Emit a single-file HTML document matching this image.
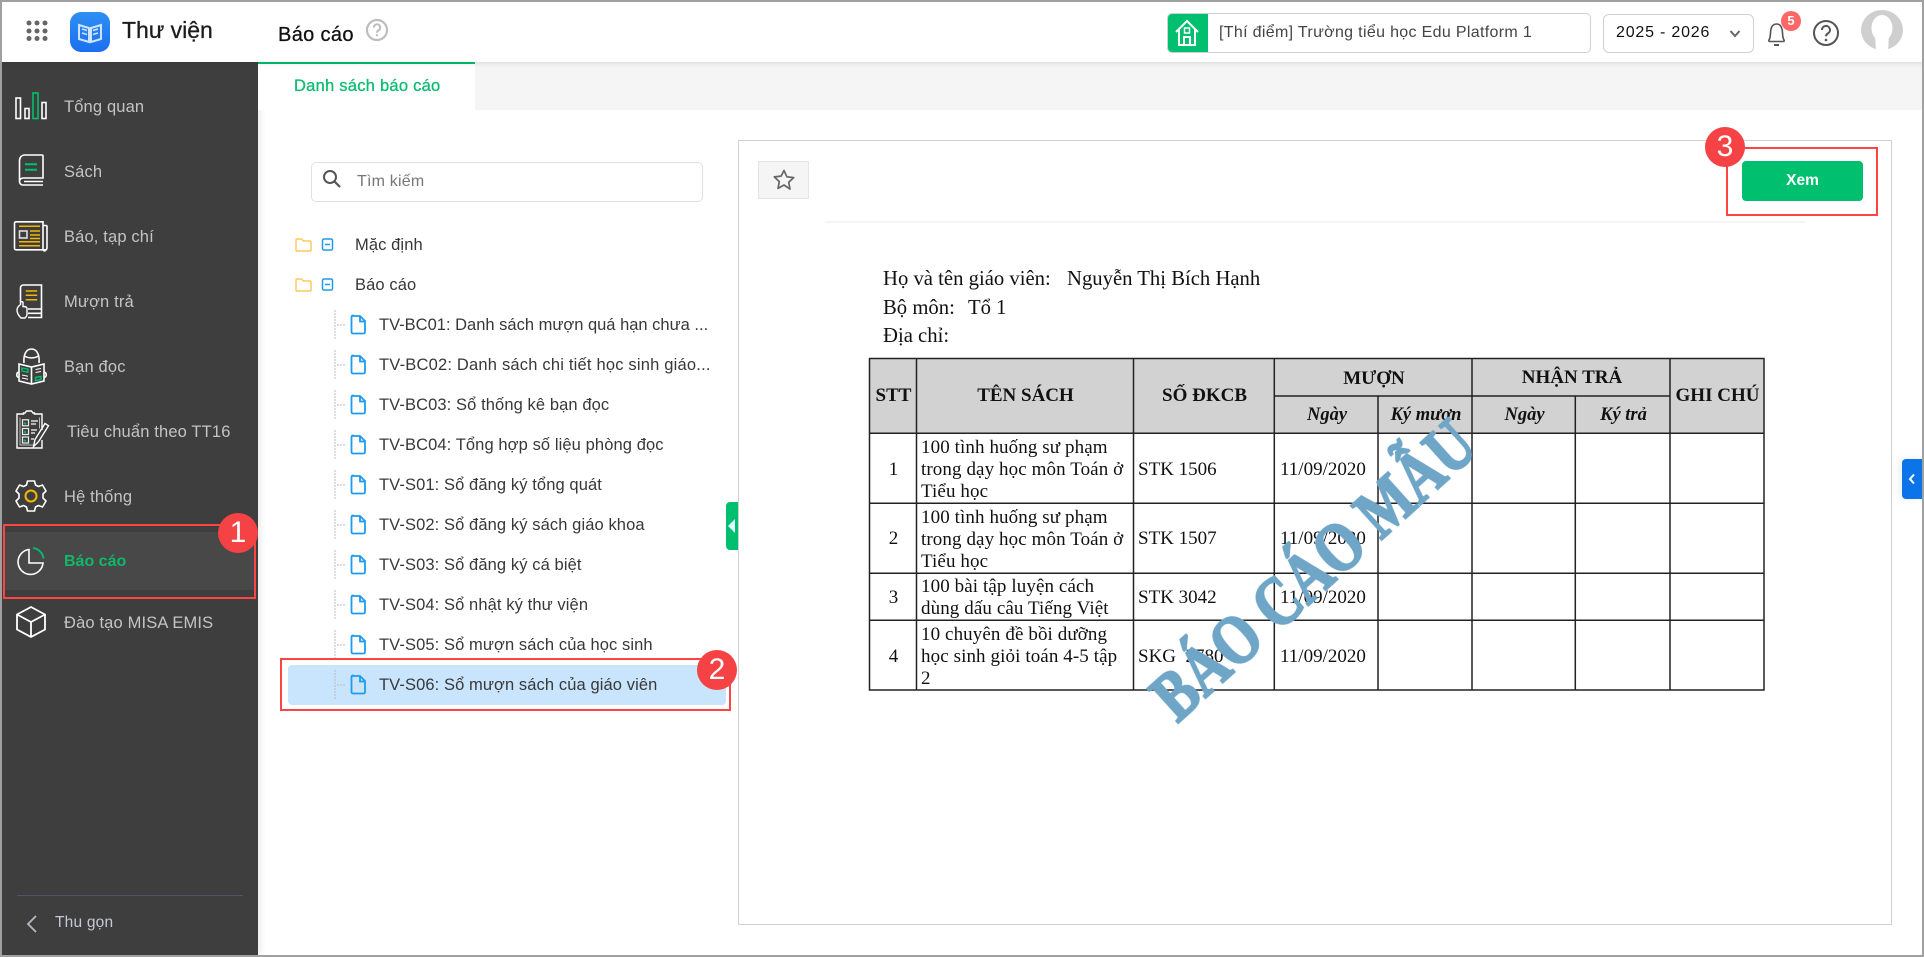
<!DOCTYPE html>
<html lang="vi"><head><meta charset="utf-8"><title>Thư viện</title>
<style>
*{box-sizing:border-box}
html,body{margin:0;padding:0;width:1924px;height:957px;overflow:hidden;background:#fff;font-family:"Liberation Sans",sans-serif}
.a{position:absolute}
.t{position:absolute;white-space:nowrap;height:24px;line-height:24px}
.nav{font-size:16.500px;letter-spacing:.15px;color:#c4c4c4;left:64px}
.tree{font-size:16.500px;letter-spacing:.1px;color:#383838}
.ic{position:absolute;overflow:visible}
.rb{position:absolute;border:2px solid #f44;z-index:5}
.badge{position:absolute;width:40px;height:40px;border-radius:50%;background:#f44245;color:#fff;font-size:30px;line-height:40px;text-align:center;z-index:6}
.s{font-family:"Liberation Serif",serif;color:#111;position:absolute;white-space:nowrap;filter:blur(.35px)}
.c{text-align:center}
.h{font-size:19px;line-height:24px;font-weight:bold}
.i{font-size:18.500px;line-height:24px;font-weight:bold;font-style:italic}
.b{font-size:19px;line-height:24px}
.m{font-size:19px;line-height:22px;letter-spacing:.1px}
.d{font-size:20.700px;line-height:24px}
</style></head><body>

<!-- header -->
<div class="a" style="left:0;top:0;width:1924px;height:62px;background:#fff;box-shadow:0 1px 5px rgba(0,0,0,.12);z-index:2"></div>
<div class="a" style="left:258px;top:62px;width:1666px;height:48px;background:#f5f5f5"></div>

<div style="position:absolute;left:0;top:0;width:1924px;height:62px;z-index:3">
<svg class="ic" style="left:0;top:0" width="120" height="60">
 <g fill="#666"><circle cx="29" cy="23" r="2.5"/><circle cx="37" cy="23" r="2.5"/><circle cx="45" cy="23" r="2.5"/><circle cx="29" cy="31" r="2.5"/><circle cx="37" cy="31" r="2.5"/><circle cx="45" cy="31" r="2.5"/><circle cx="29" cy="38.500" r="2.5"/><circle cx="37" cy="38.500" r="2.5"/><circle cx="45" cy="38.500" r="2.5"/></g>
 <defs><linearGradient id="g" x1="0" y1="0" x2="0" y2="1"><stop offset="0" stop-color="#2f8ff5"/><stop offset="1" stop-color="#1a6ff0"/></linearGradient></defs>
 <rect x="70" y="12" width="40" height="40" rx="11" fill="url(#g)"/>
 <path d="M79 25l10 3v14l-10-3zM101 25l-10 3v14l10-3z" fill="none" stroke="#cfe4ff" stroke-width="2"/>
 <path d="M82 29l5 1.500M82 33l5 1.500M98 29l-5 1.500M98 33l-5 1.500" stroke="#cfe4ff" stroke-width="1.500"/>
</svg>
<div class="t" style="left:122px;top:18px;font-size:23px;color:#1c1c1c;-webkit-text-stroke:.3px #1c1c1c">Thư viện</div>
<div class="t" style="left:278px;top:23px;font-size:20px;letter-spacing:.35px;color:#111;-webkit-text-stroke:.3px #111">Báo cáo</div>
<svg class="ic" style="left:365px;top:18px" width="24" height="24"><circle cx="12" cy="12" r="10" fill="none" stroke="#bdbdbd" stroke-width="2.200"/><path d="M8.800 9.500a3.200 3.200 0 1 1 4.800 2.800c-1 .6-1.600 1.100-1.600 2.400" fill="none" stroke="#bdbdbd" stroke-width="2"/><circle cx="12" cy="17.300" r="1.200" fill="#bdbdbd"/></svg>

<!-- school select -->
<div class="a" style="left:1167px;top:13px;width:424px;height:40px;border:1px solid #d0d0d0;border-radius:5px;background:#fff;overflow:hidden"><div style="width:40px;height:40px;background:#00bf6f"></div></div>
<svg class="ic" style="left:1174px;top:19px" width="26" height="28"><path d="M2 13L13 2l11 11M5 10v16h16V10M10 26v-8h6v8" fill="none" stroke="#fff" stroke-width="2"/><rect x="10.500" y="9" width="5" height="5" fill="none" stroke="#fff" stroke-width="1.500"/></svg>
<div class="t" style="left:1219px;top:21px;font-size:16px;letter-spacing:.33px;color:#444">[Thí điểm] Trường tiểu học Edu Platform 1</div>
<div class="a" style="left:1603px;top:14px;width:151px;height:39px;border:1px solid #d0d0d0;border-radius:6px;background:#fff"></div>
<div class="t" style="left:1616px;top:21px;font-size:16px;letter-spacing:.8px;color:#111">2025 - 2026</div>
<svg class="ic" style="left:1729px;top:29px" width="12" height="10"><path d="M1.500 2l4.500 5 4.500-5" fill="none" stroke="#666" stroke-width="2"/></svg>
<svg class="ic" style="left:1762px;top:18px" width="28" height="30"><path d="M7 22c2-3 1-7 2-11 .8-3.500 3-5 5.500-5s4.700 1.500 5.500 5c1 4 0 8 2 11 .5 1 0 1.500-1 1.500H8c-1 0-1.500-.5-1-1.500z" fill="none" stroke="#555" stroke-width="1.600"/><path d="M12 27h5" stroke="#555" stroke-width="2"/></svg>
<div class="a" style="left:1781px;top:11px;width:20px;height:20px;border-radius:50%;background:#f66;color:#fff;font-size:13px;font-weight:bold;text-align:center;line-height:20px">5</div>
<svg class="ic" style="left:1812px;top:19px" width="28" height="28"><circle cx="14" cy="14" r="12" fill="none" stroke="#555" stroke-width="2"/><path d="M10 11a4 4 0 1 1 6 3.400c-1.300.8-2 1.400-2 2.900" fill="none" stroke="#555" stroke-width="2"/><circle cx="14" cy="21" r="1.300" fill="#555"/></svg>
<svg class="ic" style="left:1860px;top:10px" width="44" height="42"><ellipse cx="22" cy="20" rx="21" ry="20" fill="#cfcfcf"/><ellipse cx="22" cy="18" rx="10.500" ry="13" fill="#fff"/><path d="M15 25h14l-1 16h-12z" fill="#fff"/></svg>
</div>

<!-- sidebar -->
<div class="a" style="left:2px;top:62px;width:256px;height:893px;background:#3e3e3e;box-shadow:3px 0 6px rgba(0,0,0,.08)"></div>
<div class="a" style="left:4px;top:532px;width:252px;height:58px;background:#484848;border-left:1px solid #00bf6f"></div>

<svg class="ic" style="left:0;top:0;z-index:1" width="258" height="660" fill="none" stroke="#fff" stroke-width="1.600">
 <!-- Tổng quan -->
 <rect x="16" y="98" width="4.500" height="20.500"/><rect x="25" y="108.500" width="4" height="10"/><rect x="33" y="93" width="5" height="25.500" stroke="#00bf6f"/><rect x="42" y="102.500" width="4" height="16"/>
 <!-- Sách -->
 <path d="M25 155h17a1 1 0 0 1 1 1v22H23a3.500 3.500 0 0 0-3.500 3.500c0 2 1.500 3.500 3.500 3.500h20M24 181.500h19M19.500 181.500V161c0-3.500 2-6 5.500-6"/>
 <path d="M25 164.300h12M25 169.700h12" stroke="#00bf6f" stroke-width="2"/>
 <!-- Báo -->
 <path d="M16 221.800h27v27a1 1 0 0 0 3 1H16a1.500 1.500 0 0 1-1.500-1.500v-25a1.500 1.500 0 0 1 1.500-1.500zM43 225.500h3a1 1 0 0 1 1 1V248a2 2 0 0 1-2 2"/>
 <path d="M19 226.300h21M30 231h10M30 235h10M30 238.500h10M19 241.800h21M19 245.800h21" stroke="#f2b705" stroke-width="1.500"/><rect x="19.500" y="231" width="7.500" height="7" stroke="#ddd"/>
 <!-- Mượn trả -->
 <path d="M20.500 302v-14c0-1.800 1.200-3 3-3h18v32.500H28M28 309h14M28 313.300h14"/>
 <path d="M25.700 291h11.500M25.700 295.300h11.500M25.700 299.700h11.500" stroke="#f2b705" stroke-width="1.500"/>
 <path d="M17 310c0-2.500 1.500-4 3.500-5.500v-2c0-1 2.500-1 2.500 0v4c2 0 4 .5 4 2v6c0 1.500-1 2.500-2 3.500h-4c-2-2-4-5-4-8z" stroke-width="1.400"/>
 <!-- Bạn đọc -->
 <path d="M24 363c-.8-9 2.500-14 7.500-14s8.300 5 7.500 14M24.500 356c4 2.500 10 2.500 14 0"/>
 <path d="M19 364l12.500 3 12.500-3v17l-12.500 3-12.500-3zM31.500 367v17"/><path d="M19 372c-3 .5-3 5 0 5.500M44 372c3 .5 3 5 0 5.500"/>
 <path d="M22 368l6 1.200v3l-6-1.200zM35.500 377.500l5.500-1v3l-5.500 1z" stroke="#00bf6f" stroke-width="1.400"/>
 <path d="M22 375l6 1.200M22 378l6 1.200M35.500 369.500l5.500-1M35.500 372.500l5.500-1" stroke-width="1"/>
 <!-- Tiêu chuẩn -->
 <path d="M42 430v-16h-7.500v-1h-1.500l-1.500-2h-5l-1.500 2h-1.500v1H17v34h25v-8" stroke-width="1.400"/>
 <path d="M20 417.500v27.500h13M39.500 417.500v11" stroke="#bbb" stroke-width="1"/>
 <rect x="22.500" y="419.800" width="6" height="6" stroke="#eee" stroke-width="1.200"/><rect x="22.500" y="428.500" width="6" height="6" stroke="#eee" stroke-width="1.200"/><rect x="22.500" y="437" width="6" height="6" stroke="#eee" stroke-width="1.200"/>
 <path d="M24 423l2 1M24 431.500l2 1M24 440l2 1" stroke="#00bf6f" stroke-width="2"/>
 <path d="M31 421h7M31 424h5M31 430h6M31 433h4M31 439h3" stroke-width="1.200"/>
 <path d="M33.500 446.500l1.500-7 10-16 3.500 2.200-10 16z" stroke-width="1.400"/>
 <!-- Gear -->
 <path d="M27.500 481h7l1 4 3 1.500 4-1.500 3.500 6-3 3v4l3 3-3.500 6-4-1.500-3 1.500-1 4h-7l-1-4-3-1.500-4 1.500-3.500-6 3-3v-4l-3-3 3.500-6 4 1.500 3-1.500z" stroke-linejoin="round"/>
 <circle cx="31" cy="496" r="5.500" stroke="#f2b705" stroke-width="2"/>
 <!-- Pie -->
 <path d="M29 549.500a12.500 12.500 0 1 0 14 13.500H29z" stroke-width="1.600"/>
 <path d="M33 548a12 12 0 0 1 10.500 10.500" stroke="#00bf6f" stroke-width="1.800"/>
 <!-- Cube -->
 <path d="M31 607l14 7.500v15L31 637l-14-7.500v-15zM17 614.500L31 622l14-7.500M31 622v15" stroke-width="1.800"/>
</svg>

<div class="t nav" style="top:95px">Tổng quan</div>
<div class="t nav" style="top:160px">Sách</div>
<div class="t nav" style="top:225px">Báo, tạp chí</div>
<div class="t nav" style="top:290px">Mượn trả</div>
<div class="t nav" style="top:355px">Bạn đọc</div>
<div class="t nav" style="top:420px;left:67px">Tiêu chuẩn theo TT16</div>
<div class="t nav" style="top:485px">Hệ thống</div>
<div class="t nav" style="top:550px;color:#10b869;font-weight:bold;font-size:16px;letter-spacing:0">Báo cáo</div>
<div class="t nav" style="top:611px">Đào tạo MISA EMIS</div>

<div class="a" style="left:17px;top:895px;width:226px;height:1px;background:#4c5766"></div>
<svg class="ic" style="left:25px;top:914px" width="14" height="20"><path d="M11 2L3 10l8 8" fill="none" stroke="#b8b8c4" stroke-width="1.800"/></svg>
<div class="t" style="left:55px;top:911px;font-size:15.500px;letter-spacing:.2px;color:#c6c8d6">Thu gọn</div>

<div class="rb" style="left:3px;top:524px;width:253px;height:75px"></div>
<div class="badge" style="left:218px;top:513px">1</div>

<!-- tab -->
<div class="a" style="left:258px;top:62px;width:217px;height:48px;background:#fff;border-top:2px solid #00bf6f"></div>
<div class="t" style="left:294px;top:74px;font-size:16.500px;letter-spacing:.25px;color:#0cbc70;-webkit-text-stroke:.3px #0cbc70">Danh sách báo cáo</div>

<!-- search -->
<div class="a" style="left:311px;top:162px;width:392px;height:40px;border:1px solid #e0e0e0;border-radius:5px"></div>
<svg class="ic" style="left:322px;top:169px" width="20" height="20"><circle cx="8" cy="8" r="6" fill="none" stroke="#555" stroke-width="2"/><path d="M12.500 12.500L18 18" stroke="#555" stroke-width="2.200"/></svg>
<div class="t" style="left:357px;top:170px;font-size:16px;letter-spacing:.2px;color:#777">Tìm kiếm</div>

<!-- tree -->
<svg class="ic" style="left:0;top:0" width="740" height="720" fill="none">
 <g id="f1"><path d="M297 239h4.500l2 2h6.500a1 1 0 0 1 1 1v8a1 1 0 0 1-1 1H297a1 1 0 0 1-1-1V240a1 1 0 0 1 1-1z" stroke="#fdc95d" stroke-width="1.500"/><rect x="322.500" y="239" width="10" height="11" rx="1.500" stroke="#1e9bef" stroke-width="1.500"/><path d="M325 244.500h5" stroke="#1e9bef" stroke-width="1.500"/></g>
 <use href="#f1" y="40"/>
 <defs>
  <g id="d">
   <path d="M335 310v29" stroke="#bbb" stroke-dasharray="2 1"/><path d="M337 325h9" stroke="#bbb" stroke-dasharray="2 1"/>
   <path d="M353 316h7l5 5v11a1.500 1.500 0 0 1-1.500 1.500h-10.500a1.500 1.500 0 0 1-1.500-1.500v-15a1.500 1.500 0 0 1 1.500-1.500z" stroke="#1e9bef" stroke-width="1.800"/><path d="M360 316v5.500h5" stroke="#1e9bef" stroke-width="1.800"/>
  </g>
 </defs>
</svg>
<div class="t tree" style="left:355px;top:233px">Mặc định</div>
<div class="t tree" style="left:355px;top:273px">Báo cáo</div>

<div class="a" style="left:288px;top:665px;width:438px;height:40px;border-radius:4px;background:#c9e5fd"></div>
<svg class="ic" style="left:0;top:0" width="740" height="720" fill="none">
 <use href="#d" y="0"/><use href="#d" y="40"/><use href="#d" y="80"/><use href="#d" y="120"/><use href="#d" y="160"/><use href="#d" y="200"/><use href="#d" y="240"/><use href="#d" y="280"/><use href="#d" y="320"/><use href="#d" y="360"/>
</svg>
<div class="t tree" style="left:379px;top:313px;letter-spacing:0">TV-BC01: Danh sách mượn quá hạn chưa ...</div>
<div class="t tree" style="left:379px;top:353px;letter-spacing:.2px">TV-BC02: Danh sách chi tiết học sinh giáo...</div>
<div class="t tree" style="left:379px;top:393px">TV-BC03: Sổ thống kê bạn đọc</div>
<div class="t tree" style="left:379px;top:433px">TV-BC04: Tổng hợp số liệu phòng đọc</div>
<div class="t tree" style="left:379px;top:473px">TV-S01: Sổ đăng ký tổng quát</div>
<div class="t tree" style="left:379px;top:513px">TV-S02: Sổ đăng ký sách giáo khoa</div>
<div class="t tree" style="left:379px;top:553px">TV-S03: Sổ đăng ký cá biệt</div>
<div class="t tree" style="left:379px;top:593px">TV-S04: Sổ nhật ký thư viện</div>
<div class="t tree" style="left:379px;top:633px">TV-S05: Sổ mượn sách của học sinh</div>
<div class="t tree" style="left:379px;top:673px">TV-S06: Sổ mượn sách của giáo viên</div>
<div class="rb" style="left:280px;top:658px;width:451px;height:53px"></div>
<div class="badge" style="left:697px;top:650px">2</div>

<!-- splitter -->
<div class="a" style="left:726px;top:502px;width:12px;height:48px;background:#00bf6f;border-radius:4px 0 0 4px"></div>
<svg class="ic" style="left:728px;top:518px" width="8" height="16"><path d="M7 1v14L0 8z" fill="#dff"/></svg>

<!-- panel -->
<div class="a" style="left:738px;top:140px;width:1154px;height:785px;border:1px solid #d0d0d0"></div>
<div class="a" style="left:758px;top:161px;width:51px;height:38px;background:#f5f5f5;border:1px solid #e5e5e5"></div>
<svg class="ic" style="left:772px;top:168px" width="24" height="24"><path d="M12 2.500l2.900 6.300 6.800.8-5 4.700 1.300 6.800L12 17l-6 3.400 1.300-6.800-5-4.700 6.800-.8z" fill="none" stroke="#666" stroke-width="1.700" stroke-linejoin="round"/></svg>
<div class="a" style="left:825px;top:221px;width:980px;height:2px;background:#f4f4f4"></div>
<div class="a" style="left:1742px;top:161px;width:121px;height:40px;background:#00bf6f;border-radius:4px"></div>
<div class="a" style="left:1742px;top:169px;width:121px;height:24px;line-height:24px;color:#fff;font-size:15.500px;font-weight:bold;text-align:center">Xem</div>
<div class="rb" style="left:1726px;top:147px;width:152px;height:69px"></div>
<div class="badge" style="left:1705px;top:127px">3</div>

<!-- document -->
<div class="s d" style="left:883px;top:267px">Họ và tên giáo viên:</div>
<div class="s d" style="left:1067px;top:267px">Nguyễn Thị Bích Hạnh</div>
<div class="s d" style="left:883px;top:296px">Bộ môn:</div>
<div class="s d" style="left:968px;top:296px">Tổ 1</div>
<div class="s d" style="left:883px;top:324px">Địa chỉ:</div>

<div class="a" style="left:869px;top:358px;width:895px;height:75px;background:#d2d2d2"></div>
<svg class="ic" style="left:0;top:0;filter:blur(.25px)" width="1800" height="700" fill="none" stroke="#222" stroke-width="1.500">
 <path d="M869 358.500H1764.500M1274 396H1670M869 433.300H1764.500M869 503.300H1764.500M869 573.300H1764.500M869 620.300H1764.500M869 690H1764.500"/>
 <path d="M869.500 358V690.500M916.500 358V690.500M1133.500 358V690.500M1274.300 358V690.500M1378 396V690.500M1472 358V690.500M1575.300 396V690.500M1670 358V690.500M1764 358V690.500"/>
</svg>

<div class="s c h" style="left:870px;width:47px;top:384px">STT</div>
<div class="s c h" style="left:917px;width:217px;top:384px">TÊN SÁCH</div>
<div class="s c h" style="left:1134px;width:141px;top:384px">SỐ ĐKCB</div>
<div class="s c h" style="left:1275px;width:198px;top:367px">MƯỢN</div>
<div class="s c h" style="left:1473px;width:198px;top:366px">NHẬN TRẢ</div>
<div class="s c h" style="left:1671px;width:93px;top:384px">GHI CHÚ</div>
<div class="s c i" style="left:1275px;width:104px;top:403px">Ngày</div>
<div class="s c i" style="left:1379px;width:94px;top:403px">Ký mượn</div>
<div class="s c i" style="left:1473px;width:103px;top:403px">Ngày</div>
<div class="s c i" style="left:1576px;width:95px;top:403px">Ký trả</div>

<div class="s c b" style="left:870px;width:47px;top:458px">1</div>
<div class="s c b" style="left:870px;width:47px;top:527px">2</div>
<div class="s c b" style="left:870px;width:47px;top:586px">3</div>
<div class="s c b" style="left:870px;width:47px;top:645px">4</div>

<div class="s m" style="left:921px;top:437px">100 tình huống sư phạm<br>trong dạy học môn Toán ở<br>Tiểu học</div>
<div class="s m" style="left:921px;top:507px">100 tình huống sư phạm<br>trong dạy học môn Toán ở<br>Tiểu học</div>
<div class="s m" style="left:921px;top:576px">100 bài tập luyện cách<br>dùng dấu câu Tiếng Việt</div>
<div class="s m" style="left:921px;top:624px">10 chuyên đề bồi dưỡng<br>học sinh giỏi toán 4-5 tập<br>2</div>

<div class="s b" style="left:1138px;top:458px">STK 1506</div>
<div class="s b" style="left:1138px;top:527px">STK 1507</div>
<div class="s b" style="left:1138px;top:586px">STK 3042</div>
<div class="s b" style="left:1138px;top:645px">SKG &nbsp;2780</div>
<div class="s b" style="left:1280px;top:458px">11/09/2020</div>
<div class="s b" style="left:1280px;top:527px">11/09/2020</div>
<div class="s b" style="left:1280px;top:586px">11/09/2020</div>
<div class="s b" style="left:1280px;top:645px">11/09/2020</div>

<!-- watermark -->
<div class="a" style="left:1314px;top:571px;width:0;height:0;z-index:4">
 <div style="position:absolute;left:-400px;top:-50px;width:800px;height:100px;line-height:100px;text-align:center;font-family:'Liberation Serif',serif;font-weight:bold;font-size:70px;color:#6fa6c8;-webkit-text-stroke:2.200px #6fa6c8;white-space:nowrap;transform:rotate(-42deg) scaleX(.8);filter:blur(.3px)">BÁO CÁO MẪU</div>
</div>

<!-- right tab -->
<div class="a" style="left:1902px;top:459px;width:22px;height:40px;background:#0a74e8;border-radius:4px 0 0 4px;box-shadow:-2px 0 8px rgba(0,0,0,.08)"></div>
<svg class="ic" style="left:1908px;top:473px" width="8" height="12"><path d="M6 1.500L2 6l4 4.500" fill="none" stroke="#fff" stroke-width="2"/></svg>

<!-- frame -->
<div class="a" style="left:0;top:0;width:1924px;height:2px;background:#a0a0a0;z-index:9"></div>
<div class="a" style="left:0;top:0;width:2px;height:957px;background:#a0a0a0;z-index:9"></div>
<div class="a" style="left:0;top:955px;width:1924px;height:2px;background:#a0a0a0;z-index:9"></div>
<div class="a" style="left:1922px;top:0;width:2px;height:957px;background:#a0a0a0;z-index:9"></div>
</body></html>
